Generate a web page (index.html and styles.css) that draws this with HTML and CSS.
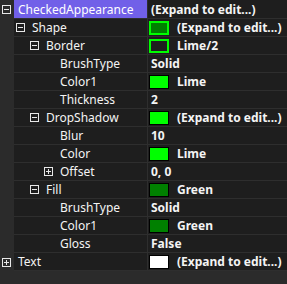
FILE: index.html
```html
<!DOCTYPE html>
<html lang="en">

<head>
    <meta charset="UTF-8">
    <meta name="viewport" content="width=device-width, initial-scale=1.0">
    <title>Property Grid</title>
    <link rel="stylesheet" href="styles.css">
</head>

<body>
    <div class="grid">
        <div class="row selected">
            <div class="gutter"><span class="tog minus"></span></div>
            <div class="name">CheckedAppearance</div>
            <div class="value">(Expand to edit...)</div>
        </div>
        <div class="row">
            <div class="gutter"></div>
            <div class="name l1"><span class="tog minus"></span>Shape</div>
            <div class="value"><span class="swatch framed green"></span>(Expand to edit...)</div>
        </div>
        <div class="row">
            <div class="gutter"></div>
            <div class="name l2"><span class="tog minus"></span>Border</div>
            <div class="value"><span class="swatch framed"></span>Lime/2</div>
        </div>
        <div class="row">
            <div class="gutter"></div>
            <div class="name l3"><span class="tog blank"></span>BrushType</div>
            <div class="value">Solid</div>
        </div>
        <div class="row">
            <div class="gutter"></div>
            <div class="name l3"><span class="tog blank"></span>Color1</div>
            <div class="value"><span class="swatch lime"></span>Lime</div>
        </div>
        <div class="row">
            <div class="gutter"></div>
            <div class="name l3"><span class="tog blank"></span>Thickness</div>
            <div class="value">2</div>
        </div>
        <div class="row">
            <div class="gutter"></div>
            <div class="name l2"><span class="tog minus"></span>DropShadow</div>
            <div class="value"><span class="swatch lime"></span>(Expand to edit...)</div>
        </div>
        <div class="row">
            <div class="gutter"></div>
            <div class="name l3"><span class="tog blank"></span>Blur</div>
            <div class="value">10</div>
        </div>
        <div class="row">
            <div class="gutter"></div>
            <div class="name l3"><span class="tog blank"></span>Color</div>
            <div class="value"><span class="swatch lime"></span>Lime</div>
        </div>
        <div class="row">
            <div class="gutter"></div>
            <div class="name l3"><span class="tog plus"></span>Offset</div>
            <div class="value">0, 0</div>
        </div>
        <div class="row">
            <div class="gutter"></div>
            <div class="name l2"><span class="tog minus"></span>Fill</div>
            <div class="value"><span class="swatch green"></span>Green</div>
        </div>
        <div class="row">
            <div class="gutter"></div>
            <div class="name l3"><span class="tog blank"></span>BrushType</div>
            <div class="value">Solid</div>
        </div>
        <div class="row">
            <div class="gutter"></div>
            <div class="name l3"><span class="tog blank"></span>Color1</div>
            <div class="value"><span class="swatch green"></span>Green</div>
        </div>
        <div class="row">
            <div class="gutter"></div>
            <div class="name l3"><span class="tog blank"></span>Gloss</div>
            <div class="value">False</div>
        </div>
        <div class="row">
            <div class="gutter"><span class="tog plus"></span></div>
            <div class="name">Text</div>
            <div class="value"><span class="swatch white"></span>(Expand to edit...)</div>
        </div>
    </div>
</body>

</html>
```

FILE: styles.css
```css
body {
    margin: 0;
    padding: 0;
    background-color: #2b2b2b;
    font-family: "Noto Sans", sans-serif;
    font-size: 12px;
    color: #f4f4f4;
    overflow: hidden;
}

.grid {
    display: flex;
    flex-direction: column;
}

.row {
    display: flex;
    height: 18px;
    align-items: stretch;
}

.row:first-child {
    height: 19px;
}

.gutter {
    width: 14px;
    flex: none;
    display: flex;
    align-items: center;
    padding-left: 2px;
    box-sizing: border-box;
}

.name {
    width: 134px;
    flex: none;
    box-sizing: border-box;
    display: flex;
    align-items: center;
    padding-left: 4px;
    background-color: #1e1e1e;
    border-right: 1px solid #2e2e2e;
    border-bottom: 1px solid #2e2e2e;
    white-space: nowrap;
}

.name.l1 { padding-left: 2px; }
.name.l2 { padding-left: 16px; }
.name.l3 { padding-left: 30px; }

.value {
    flex: 1;
    display: flex;
    align-items: center;
    padding-left: 3px;
    background-color: #1e1e1e;
    border-bottom: 1px solid #2e2e2e;
    font-weight: bold;
    white-space: nowrap;
}

.selected .name {
    background-color: #7160e8;
    color: #ffffff;
}

/* expand / collapse boxes */
.tog {
    position: relative;
    flex: none;
    width: 9px;
    height: 9px;
    box-sizing: border-box;
    border: 1px solid #e8e8e8;
    margin-right: 7px;
}

.tog.blank {
    visibility: hidden;
}

.tog.minus::before,
.tog.plus::before {
    content: "";
    position: absolute;
    left: 1px;
    top: 3px;
    width: 5px;
    height: 1px;
    background-color: #e8e8e8;
}

.tog.plus::after {
    content: "";
    position: absolute;
    left: 3px;
    top: 1px;
    width: 1px;
    height: 5px;
    background-color: #e8e8e8;
}

.swatch {
    flex: none;
    width: 20px;
    height: 14px;
    box-sizing: border-box;
    border: 1px solid #000000;
    margin-left: -2px;
    margin-right: 8px;
}

.swatch.lime { background-color: #00ff00; }
.swatch.green { background-color: #008000; }
.swatch.white { background-color: #ffffff; }

.swatch.framed {
    border: 2px solid #00ff00;
    background-color: #1e1e1e;
}

.swatch.framed.green {
    background-color: #008000;
}
```
